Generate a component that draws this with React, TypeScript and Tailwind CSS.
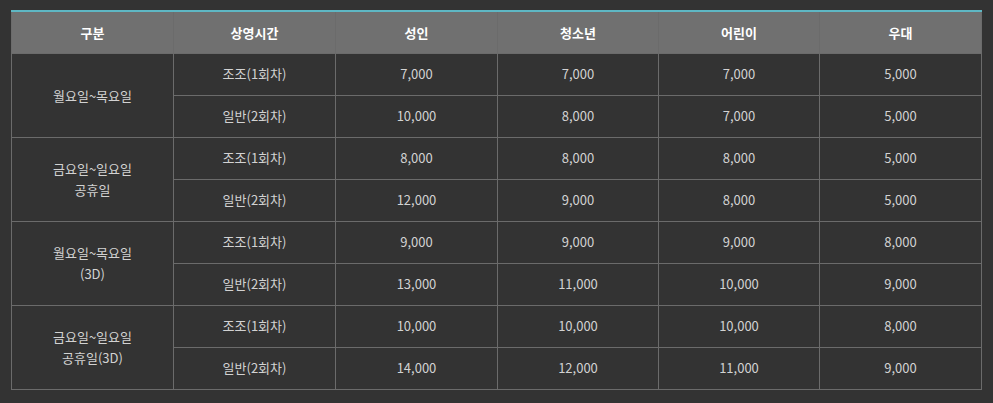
import React from "react";

const groups = [
  { label: ["월요일~목요일"], rows: [["조조(1회차)", "7,000", "7,000", "7,000", "5,000"], ["일반(2회차)", "10,000", "8,000", "7,000", "5,000"]] },
  { label: ["금요일~일요일", "공휴일"], rows: [["조조(1회차)", "8,000", "8,000", "8,000", "5,000"], ["일반(2회차)", "12,000", "9,000", "8,000", "5,000"]] },
  { label: ["월요일~목요일", "(3D)"], rows: [["조조(1회차)", "9,000", "9,000", "9,000", "8,000"], ["일반(2회차)", "13,000", "11,000", "10,000", "9,000"]] },
  { label: ["금요일~일요일", "공휴일(3D)"], rows: [["조조(1회차)", "10,000", "10,000", "10,000", "8,000"], ["일반(2회차)", "14,000", "12,000", "11,000", "9,000"]] },
];

const heads = ["구분", "상영시간", "성인", "청소년", "어린이", "우대"];
const widths = ["w-[162px]", "w-[162px]", "w-[162px]", "w-[161px]", "w-[161px]", "w-[162px]"];

export default function App() {
  return (
    <div className="w-[993px] h-[403px] bg-[#333333] pt-[10px] pl-[11px]" style={{ fontFamily: '"Noto Sans CJK KR", "Noto Sans", sans-serif' }}>
      <table className="w-[970px] border-collapse table-fixed text-[13px] border-t-2 border-t-[#5eb7c4]">
        <colgroup>
          {widths.map((w, i) => (
            <col key={i} className={w} />
          ))}
        </colgroup>
        <thead>
          <tr className="h-[42px] bg-[#707070]">
            {heads.map((h, i) => (
              <th key={i} className="font-bold text-white text-center border-x border-[#6b6b6b]">{h}</th>
            ))}
          </tr>
        </thead>
        <tbody>
          {groups.map((g, gi) =>
            g.rows.map((r, ri) => (
              <tr key={`${gi}-${ri}`} className="h-[42px]">
                {ri === 0 && (
                  <td rowSpan={2} className="border border-[#6b6b6b] text-center text-[#d2d2d2] leading-[21px]">
                    {g.label.map((l, li) => (
                      <div key={li}>{l}</div>
                    ))}
                  </td>
                )}
                {r.map((c, ci) => (
                  <td key={ci} className="border border-[#6b6b6b] text-center text-[#d2d2d2]">{c}</td>
                ))}
              </tr>
            ))
          )}
        </tbody>
      </table>
    </div>
  );
}
